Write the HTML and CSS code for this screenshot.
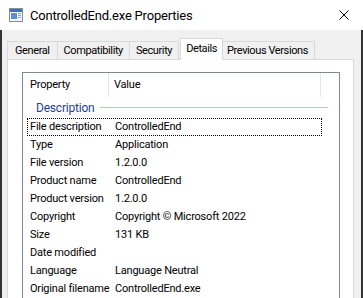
FILE: index.html
```html
<!DOCTYPE html>
<html lang="en">
<head>
    <meta charset="UTF-8">
    <title>ControlledEnd.exe Properties</title>
    <link rel="stylesheet" href="styles.css">
</head>
<body>
    <div class="titlebar">
        <svg class="app-icon" width="16" height="16" viewBox="0 0 16 16">
            <rect x="1.5" y="1.5" width="13" height="13" fill="#f4f7fb" stroke="#7d8ea8"/>
            <rect x="2" y="2" width="12" height="3" fill="#3b6fc4"/>
            <rect x="3" y="6" width="6" height="6" fill="#5d8fd6"/>
            <rect x="10" y="6" width="3" height="1" fill="#8ea3c4"/>
            <rect x="10" y="8" width="3" height="1" fill="#8ea3c4"/>
            <rect x="10" y="10" width="3" height="1" fill="#8ea3c4"/>
        </svg>
        <span class="title">ControlledEnd.exe Properties</span>
        <svg class="close" width="10" height="10" viewBox="0 0 10 10">
            <path d="M0.5 0.5 L9.5 9.5 M9.5 0.5 L0.5 9.5" stroke="#000" stroke-width="1"/>
        </svg>
    </div>
    <div class="client">
        <div class="tabs">
            <div class="tab">General</div>
            <div class="tab">Compatibility</div>
            <div class="tab">Security</div>
            <div class="tab selected">Details</div>
            <div class="tab">Previous Versions</div>
        </div>
        <div class="panel">
            <div class="listview">
                <div class="header">
                    <div class="col-prop">Property</div>
                    <div class="col-val">Value</div>
                    <div class="col-rest"></div>
                </div>
                <div class="group">
                    <span class="group-name">Description</span>
                    <span class="group-line"></span>
                </div>
                <div class="row focused"><span class="prop">File description</span><span class="val">ControlledEnd</span></div>
                <div class="row"><span class="prop">Type</span><span class="val">Application</span></div>
                <div class="row"><span class="prop">File version</span><span class="val">1.2.0.0</span></div>
                <div class="row"><span class="prop">Product name</span><span class="val">ControlledEnd</span></div>
                <div class="row"><span class="prop">Product version</span><span class="val">1.2.0.0</span></div>
                <div class="row"><span class="prop">Copyright</span><span class="val">Copyright © Microsoft 2022</span></div>
                <div class="row"><span class="prop">Size</span><span class="val">131 KB</span></div>
                <div class="row"><span class="prop">Date modified</span><span class="val"></span></div>
                <div class="row"><span class="prop">Language</span><span class="val">Language Neutral</span></div>
                <div class="row"><span class="prop">Original filename</span><span class="val">ControlledEnd.exe</span></div>
            </div>
        </div>
    </div>
</body>
</html>
```

FILE: styles.css
```css
html, body { margin: 0; padding: 0; height: 100%; overflow: hidden; }
body { font-family: Roboto, "Liberation Sans", sans-serif; font-size: 11px; letter-spacing: -0.2px; color: #000; background: #fff; }

.titlebar { height: 30px; display: flex; align-items: center; background: #fff; padding-left: 8px; }
.app-icon { margin-right: 6px; }
.title { flex-grow: 1; font-size: 13px; }
.close { margin-right: 14px; }

.client {
    height: calc(100% - 30px); box-sizing: border-box;
    display: flex; flex-direction: column;
    background: #f0f0f0; border-left: 2px solid #333; border-right: 2px solid #333;
    padding: 8px 7px 0 5px;
}

.tabs { display: flex; align-items: flex-end; height: 21px; flex-shrink: 0; letter-spacing: -0.4px; }
.tab {
    height: 18px; line-height: 17px; padding: 0 6px; box-sizing: border-box; white-space: nowrap;
    background: #f0f0f0; border: 1px solid #d9d9d9; border-bottom: none; margin-left: -1px;
}
.tab:first-child { margin-left: 0; padding: 0 7px; }
.tab.selected {
    height: 22px; line-height: 20px; background: #fff; margin: 0 -2px -1px 1px;
    padding: 0 5px; position: relative; z-index: 1;
}

.panel {
    flex-grow: 1; min-height: 0; overflow: hidden;
    background: #fff; border: 1px solid #d9d9d9; border-bottom: none; padding: 12px 13px 0 14px;
}

.listview { border: 1px solid #828790; height: 260px; }
.header { display: flex; height: 24px; line-height: 24px; }
.col-prop { width: 78px; padding-left: 7px; border-right: 1px solid #e5e5e5; }
.col-val { width: 206px; padding-left: 5px; border-right: 1px solid #e5e5e5; }
.col-rest { flex-grow: 1; }

.group { display: flex; align-items: center; height: 21px; padding-left: 13px; }
.group-name { color: #1e3f94; font-size: 12px; margin-right: 5px; }
.group-line { flex-grow: 1; height: 1px; background: #b4c4e6; margin-right: 11px; }

.row { display: flex; height: 18px; line-height: 18px; }
.prop { width: 85px; padding-left: 7px; white-space: nowrap; flex-shrink: 0; }
.val { white-space: nowrap; }
.row.focused { outline: 1px dotted #000; outline-offset: -1px; margin: 0 17px 0 4px; }
.row.focused .prop { padding-left: 3px; }
```
